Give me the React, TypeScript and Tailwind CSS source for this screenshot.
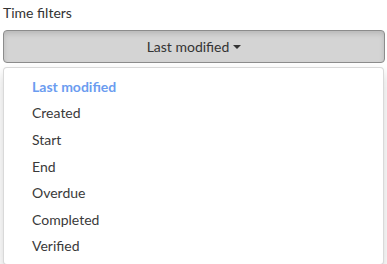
import React from "react";

const items = ["Last modified", "Created", "Start", "End", "Overdue", "Completed", "Verified"];

export default function App() {
  return (
    <div className="w-[387px] h-[264px] overflow-hidden bg-white text-[14px] text-[#333]" style={{ fontFamily: "Lato, 'Open Sans', sans-serif" }}>
      <div className="pt-[3px] pl-[3px] pr-[2px]">
        <div className="h-[20px] leading-[20px] mb-[7px]">Time filters</div>
        <button className="w-full h-[33px] flex items-center justify-center gap-[4px] bg-[#d4d4d4] border border-[#8c8c8c] rounded-[4px] shadow-[inset_0_3px_5px_rgba(0,0,0,0.125)] text-[#333] text-[14px] leading-[20px]">
          <span>Last modified</span>
          <span className="inline-block w-0 h-0 border-t-[4px] border-t-[#333] border-l-[4px] border-l-transparent border-r-[4px] border-r-transparent mt-[1px]"></span>
        </button>
        <div className="mt-[4px] mr-[1px] bg-white border border-[rgba(0,0,0,0.15)] rounded-[4px] shadow-[0_6px_12px_rgba(0,0,0,0.175)] pt-[5px] pb-[5px]">
          {items.map((it, i) => (
            <div
              key={it}
              className={
                "h-[26.6px] flex items-center pl-[28px] " +
                (i === 0 ? "font-bold text-[#6b9cf0]" : "text-[#3a3a3a]")
              }
            >
              {it}
            </div>
          ))}
        </div>
      </div>
    </div>
  );
}
